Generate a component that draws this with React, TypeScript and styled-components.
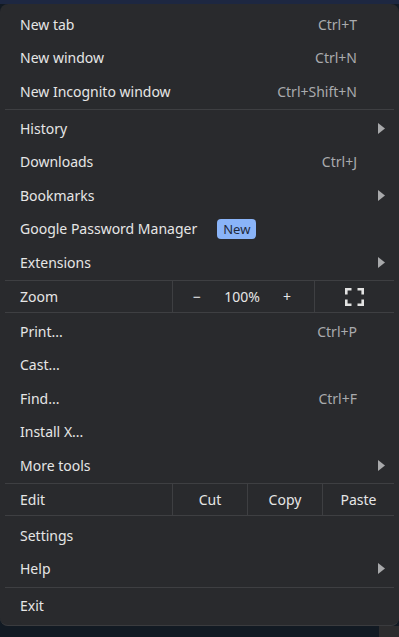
import React from "react";
import styled, { createGlobalStyle } from "styled-components";

const Global = createGlobalStyle`
  html, body { margin: 0; padding: 0; background: #121a23; }
  body { font-family: "Noto Sans", "Open Sans", Arial, sans-serif; }
  * { box-sizing: border-box; }
`;

const Page = styled.div`
  width: 399px;
  height: 637px;
  overflow: hidden;
  display: flex;
  flex-direction: column;
  background: #121a23;
`;

const TopStrip = styled.div`
  height: 4px;
  flex: none;
  background: #1d2741;
`;

const Menu = styled.div`
  flex: none;
  height: 622px;
  background: #292a2d;
  border-radius: 8px;
  border-bottom: 1px solid #3a3b3e;
  padding: 3.25px 0 0;
  display: flex;
  flex-direction: column;
`;

const Bottom = styled.div`
  flex: 1;
  display: flex;
  justify-content: flex-end;
`;

const Scrollbar = styled.div`
  width: 20px;
  background: #2c2c2e;
`;

const Row = styled.div`
  height: 33.5px;
  flex: none;
  display: flex;
  align-items: center;
  padding: 0 14px 0 20px;
  color: #e6e6e6;
  font-size: 14px;
`;

const Label = styled.span`
  white-space: nowrap;
`;

const Shortcut = styled.span`
  margin-left: auto;
  margin-right: 28px;
  color: #a9abae;
`;

const ArrowIcon = styled.svg`
  margin-left: auto;
  width: 7px;
  height: 11px;
  fill: #a8a9ab;
`;

const Badge = styled.span`
  margin-left: 20px;
  background: #8ab4f8;
  color: #1f2a3d;
  font-size: 13px;
  padding: 0 6px;
  height: 20px;
  line-height: 20px;
  border-radius: 4px;
`;

const Separator = styled.div<{ $top?: number; $bottom?: number }>`
  flex: none;
  height: 1px;
  margin: ${(p) => p.$top ?? 1.25}px 5px ${(p) => p.$bottom ?? 1.25}px;
  background: #3e3f42;
`;

const SplitRow = styled.div<{ $cols: string }>`
  flex: none;
  height: 31px;
  margin: 0 5px;
  display: grid;
  grid-template-columns: ${(p) => p.$cols};
  color: #e6e6e6;
  font-size: 14px;
`;

const SplitLabel = styled.div`
  display: flex;
  align-items: center;
  padding-left: 15px;
`;

const Cell = styled.div`
  display: flex;
  align-items: center;
  justify-content: center;
  border-left: 1px solid #3e3f42;
`;

const ZoomCell = styled(Cell)`
  justify-content: space-between;
  padding: 0 23px 0 20px;
`;

const Arrow = () => (
  <ArrowIcon viewBox="0 0 7 11">
    <path d="M0 0 L7 5.5 L0 11 Z" />
  </ArrowIcon>
);

type Item = { label: string; shortcut?: string; arrow?: boolean; badge?: string };

const MenuRow = ({ label, shortcut, arrow, badge }: Item) => (
  <Row>
    <Label>{label}</Label>
    {badge && <Badge>{badge}</Badge>}
    {shortcut && <Shortcut>{shortcut}</Shortcut>}
    {arrow && <Arrow />}
  </Row>
);

const FullscreenIcon = () => (
  <svg width="19" height="18" viewBox="0 0 19 18" fill="none" stroke="#e2e2e2" strokeWidth="2.6">
    <path d="M1.3 6.5 V1.3 H6.5" />
    <path d="M12.5 1.3 H17.7 V6.5" />
    <path d="M1.3 11.5 V16.7 H6.5" />
    <path d="M12.5 16.7 H17.7 V11.5" />
  </svg>
);

export default function App() {
  return (
    <>
      <Global />
      <Page>
        <TopStrip />
        <Menu>
          <MenuRow label="New tab" shortcut="Ctrl+T" />
          <MenuRow label="New window" shortcut="Ctrl+N" />
          <MenuRow label="New Incognito window" shortcut="Ctrl+Shift+N" />
          <Separator />
          <MenuRow label="History" arrow />
          <MenuRow label="Downloads" shortcut="Ctrl+J" />
          <MenuRow label="Bookmarks" arrow />
          <MenuRow label="Google Password Manager" badge="New" />
          <MenuRow label="Extensions" arrow />
          <Separator $bottom={0} />
          <SplitRow $cols="167px 142px 1fr">
            <SplitLabel>Zoom</SplitLabel>
            <ZoomCell>
              <span>−</span>
              <span>100%</span>
              <span>+</span>
            </ZoomCell>
            <Cell>
              <FullscreenIcon />
            </Cell>
          </SplitRow>
          <Separator $top={0} />
          <MenuRow label="Print..." shortcut="Ctrl+P" />
          <MenuRow label="Cast..." />
          <MenuRow label="Find..." shortcut="Ctrl+F" />
          <MenuRow label="Install X..." />
          <MenuRow label="More tools" arrow />
          <Separator $bottom={0} />
          <SplitRow $cols="167px 75px 75px 1fr">
            <SplitLabel>Edit</SplitLabel>
            <Cell>Cut</Cell>
            <Cell>Copy</Cell>
            <Cell>Paste</Cell>
          </SplitRow>
          <Separator $top={0} $bottom={2.25} />
          <MenuRow label="Settings" />
          <MenuRow label="Help" arrow />
          <Separator />
          <MenuRow label="Exit" />
        </Menu>
        <Bottom>
          <Scrollbar />
        </Bottom>
      </Page>
    </>
  );
}
